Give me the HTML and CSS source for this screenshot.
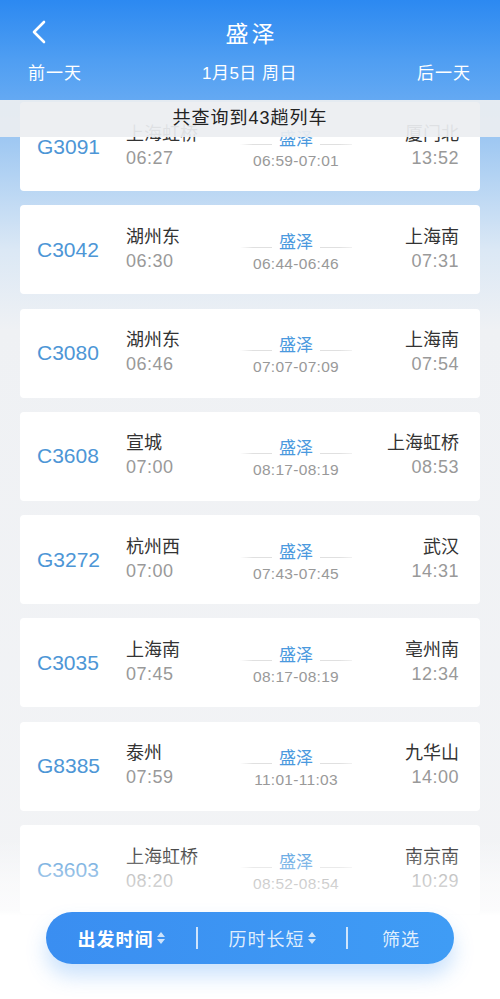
FILE: index.html
```html
<!DOCTYPE html>
<html lang="zh-CN">
<head>
    <meta charset="UTF-8">
    <meta name="viewport" content="width=device-width, initial-scale=1.0">
    <title>盛泽 - 车次列表</title>
    <link rel="stylesheet" href="styles.css">
</head>
<body>
    <div class="page">
        <header class="top-bar">
            <div class="title-row">
                <a class="back-btn" href="#">
                    <svg width="16" height="24" viewBox="0 0 16 24"><path d="M13 2 L3 12 L13 22" fill="none" stroke="#fff" stroke-width="2.6" stroke-linecap="round" stroke-linejoin="round"/></svg>
                </a>
                <h1>盛泽</h1>
            </div>
            <div class="date-row">
                <span>前一天</span>
                <span class="date">1月5日 周日</span>
                <span>后一天</span>
            </div>
        </header>

        <div class="result-tip">共查询到43趟列车</div>

        <div class="train-list">
            <div class="train-card">
                <div class="train-no">G3091</div>
                <div class="col-from"><div class="st">上海虹桥</div><div class="tm">06:27</div></div>
                <div class="col-mid"><div class="via">盛泽</div><div class="via-tm">06:59-07:01</div></div>
                <div class="col-to"><div class="st">厦门北</div><div class="tm">13:52</div></div>
            </div>
            <div class="train-card">
                <div class="train-no">C3042</div>
                <div class="col-from"><div class="st">湖州东</div><div class="tm">06:30</div></div>
                <div class="col-mid"><div class="via">盛泽</div><div class="via-tm">06:44-06:46</div></div>
                <div class="col-to"><div class="st">上海南</div><div class="tm">07:31</div></div>
            </div>
            <div class="train-card">
                <div class="train-no">C3080</div>
                <div class="col-from"><div class="st">湖州东</div><div class="tm">06:46</div></div>
                <div class="col-mid"><div class="via">盛泽</div><div class="via-tm">07:07-07:09</div></div>
                <div class="col-to"><div class="st">上海南</div><div class="tm">07:54</div></div>
            </div>
            <div class="train-card">
                <div class="train-no">C3608</div>
                <div class="col-from"><div class="st">宣城</div><div class="tm">07:00</div></div>
                <div class="col-mid"><div class="via">盛泽</div><div class="via-tm">08:17-08:19</div></div>
                <div class="col-to"><div class="st">上海虹桥</div><div class="tm">08:53</div></div>
            </div>
            <div class="train-card">
                <div class="train-no">G3272</div>
                <div class="col-from"><div class="st">杭州西</div><div class="tm">07:00</div></div>
                <div class="col-mid"><div class="via">盛泽</div><div class="via-tm">07:43-07:45</div></div>
                <div class="col-to"><div class="st">武汉</div><div class="tm">14:31</div></div>
            </div>
            <div class="train-card">
                <div class="train-no">C3035</div>
                <div class="col-from"><div class="st">上海南</div><div class="tm">07:45</div></div>
                <div class="col-mid"><div class="via">盛泽</div><div class="via-tm">08:17-08:19</div></div>
                <div class="col-to"><div class="st">亳州南</div><div class="tm">12:34</div></div>
            </div>
            <div class="train-card">
                <div class="train-no">G8385</div>
                <div class="col-from"><div class="st">泰州</div><div class="tm">07:59</div></div>
                <div class="col-mid"><div class="via">盛泽</div><div class="via-tm">11:01-11:03</div></div>
                <div class="col-to"><div class="st">九华山</div><div class="tm">14:00</div></div>
            </div>
            <div class="train-card">
                <div class="train-no">C3603</div>
                <div class="col-from"><div class="st">上海虹桥</div><div class="tm">08:20</div></div>
                <div class="col-mid"><div class="via">盛泽</div><div class="via-tm">08:52-08:54</div></div>
                <div class="col-to"><div class="st">南京南</div><div class="tm">10:29</div></div>
            </div>
        </div>

        <div class="bottom-fade"></div>

        <div class="sort-bar">
            <div class="sort-item active">出发时间<svg class="sort-ico" width="8" height="12" viewBox="0 0 8 12"><path d="M4 0 L8 5 H0 Z M0 7 H8 L4 12 Z" fill="#fff"/></svg></div>
            <div class="sort-line"></div>
            <div class="sort-item">历时长短<svg class="sort-ico" width="8" height="12" viewBox="0 0 8 12"><path d="M4 0 L8 5 H0 Z M0 7 H8 L4 12 Z" fill="#fff"/></svg></div>
            <div class="sort-line"></div>
            <div class="sort-item">筛选</div>
        </div>
    </div>
</body>
</html>
```

FILE: styles.css
```css
body {
    margin: 0;
    font-family: "Liberation Sans", "Noto Sans CJK SC", sans-serif;
}
.page {
    position: relative;
    width: 500px;
    height: 999px;
    overflow: hidden;
    background: linear-gradient(to bottom, #5ea6f3 0, #9fc8f2 140px, #dbe8f5 250px, #eff1f4 330px, #f3f4f6 100%);
}

/* header */
.top-bar {
    height: 100px;
    background: linear-gradient(to bottom, #2c89f1 0, #4f9ef2 60px, #64a9f3 100%);
    color: #fff;
}
.title-row {
    position: relative;
    height: 64px;
    display: flex;
    align-items: center;
    justify-content: center;
}
.title-row h1 {
    margin: 0 0 0 3px;
    font-size: 23px;
    font-weight: normal;
    letter-spacing: 3px;
}
.back-btn {
    position: absolute;
    left: 31px;
    top: 20px;
    display: flex;
}
.date-row {
    display: flex;
    justify-content: space-between;
    padding: 0 29px 0 28px;
    font-size: 17px;
    letter-spacing: 1px;
    line-height: 20px;
}
.date-row .date {
    letter-spacing: 0.5px;
}

/* tip over the list */
.result-tip {
    position: absolute;
    left: 0;
    right: 0;
    top: 100px;
    height: 37px;
    line-height: 37px;
    text-align: center;
    font-size: 18px;
    letter-spacing: 1px;
    color: #222;
    background: rgba(236, 238, 241, 0.93);
    z-index: 2;
}

/* list */
.train-list {
    display: flex;
    flex-direction: column;
    gap: 14.3px;
    padding: 2px 20px 0;
}
.train-card {
    height: 89px;
    display: flex;
    align-items: center;
    padding: 0 21px 0 17px;
    background: #fff;
    border-radius: 4px;
}
.train-no {
    width: 89px;
    font-size: 21px;
    color: #4d96d6;
}
.col-from {
    width: 110px;
    align-self: stretch;
    display: flex;
    flex-direction: column;
    justify-content: center;
    padding-bottom: 1px;
}
.col-to {
    flex: 1;
    text-align: right;
    align-self: stretch;
    display: flex;
    flex-direction: column;
    justify-content: center;
    padding-bottom: 1px;
}
.st {
    font-size: 18px;
    line-height: 24px;
    color: #333;
}
.tm {
    font-size: 18px;
    line-height: 25px;
    letter-spacing: 0.5px;
    color: #999;
}
.col-mid {
    width: 120px;
    text-align: center;
    padding-top: 6px;
}
.via {
    position: relative;
    font-size: 17px;
    line-height: 22px;
    color: #4a99de;
}
.via::before,
.via::after {
    content: "";
    position: absolute;
    top: 15px;
    width: 32px;
    height: 1px;
}
.via::before {
    left: 4px;
    background: linear-gradient(to right, rgba(220, 220, 220, 0), #e0e0e0 40%);
}
.via::after {
    right: 4px;
    background: linear-gradient(to right, #e0e0e0 60%, rgba(220, 220, 220, 0.4));
}
.via-tm {
    font-size: 15.5px;
    line-height: 20px;
    letter-spacing: 0.3px;
    color: #999;
}

/* bottom */
.bottom-fade {
    position: absolute;
    left: 0;
    right: 0;
    top: 840px;
    bottom: 0;
    background: linear-gradient(to bottom, rgba(255, 255, 255, 0) 0, rgba(255, 255, 255, 0.55) 45px, rgba(255, 255, 255, 0.7) 70px, #fff 76px);
}
.sort-bar {
    position: absolute;
    left: 46px;
    right: 46px;
    top: 912px;
    height: 52px;
    border-radius: 26px;
    display: flex;
    align-items: center;
    background: linear-gradient(to right, #3a8ef1, #3f9cf5);
    box-shadow: 0 12px 20px rgba(70, 150, 245, 0.28);
    color: rgba(255, 255, 255, 0.85);
    font-size: 18px;
    letter-spacing: 1px;
}
.sort-item {
    flex: 1;
    display: flex;
    align-items: center;
    justify-content: center;
}
.sort-item:first-child {
    flex: 0 0 150px;
}
.sort-item:last-child {
    flex: 0 0 106px;
}
.sort-item.active {
    color: #fff;
    font-weight: bold;
}
.sort-ico {
    margin-left: 3px;
    opacity: 0.75;
}
.sort-line {
    width: 2px;
    height: 22px;
    background: rgba(255, 255, 255, 0.75);
}
```
